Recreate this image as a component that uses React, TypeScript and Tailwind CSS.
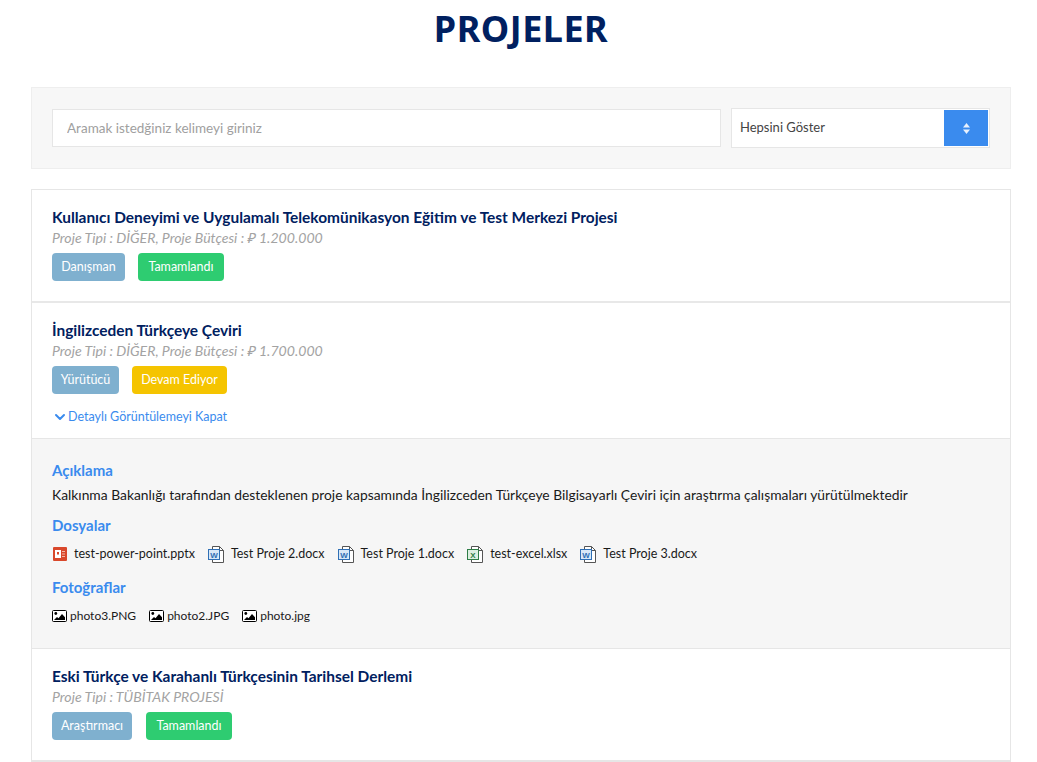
import { ChevronDown } from 'lucide-react';

const FONT = "font-['Lato','Noto_Sans',sans-serif]";

type BadgeColor = 'blue' | 'green' | 'yellow';

const badgeColors: Record<BadgeColor, string> = {
  blue: 'bg-[#7fb0cf]',
  green: 'bg-[#2ecc71]',
  yellow: 'bg-[#f5c400]',
};

function Badge({ label, color, width }: { label: string; color: BadgeColor; width: string }) {
  return (
    <span
      className={`flex h-7 items-center justify-center rounded-[4px] text-[12.5px] text-white ${badgeColors[color]} ${width}`}
    >
      {label}
    </span>
  );
}

function ProjectHead({ title, meta }: { title: string; meta: string }) {
  return (
    <>
      <h2 className="mb-[1px] text-[15.45px] leading-5 font-bold text-[#002060]">{title}</h2>
      <p className="text-[14.1px] leading-5 text-[#a3a3a3] italic">{meta}</p>
    </>
  );
}

function DocIcon({ letter, color, fill }: { letter: string; color: string; fill: string }) {
  return (
    <svg width="17" height="17" viewBox="0 0 17 17" className="shrink-0">
      <path d="M4.5 0.5h7l4 4v12h-11z" fill="#fff" stroke="#555" strokeWidth="1" />
      <path d="M11.5 0.5v4h4" fill="none" stroke="#555" strokeWidth="1" />
      <rect x="0.5" y="3.5" width="11" height="10" fill={fill} stroke={color} strokeWidth="1" />
      <text
        x="6"
        y="11.5"
        textAnchor="middle"
        fontSize="8"
        fontWeight="700"
        fontFamily="Liberation Sans, sans-serif"
        fill={color}
      >
        {letter}
      </text>
    </svg>
  );
}

function PptIcon() {
  return (
    <svg width="14" height="14" viewBox="0 0 14 14" className="ml-[1px] shrink-0">
      <rect width="14" height="14" rx="1" fill="#d9482b" />
      <rect x="2" y="3" width="6" height="8" fill="#fff" />
      <rect x="4" y="5" width="2" height="2.5" fill="#d9482b" />
      <rect x="9" y="4" width="3" height="1" fill="#f3b9a8" />
      <rect x="9" y="6.5" width="3" height="1" fill="#f3b9a8" />
      <rect x="9" y="9" width="3" height="1" fill="#f3b9a8" />
    </svg>
  );
}

function ImageIcon() {
  return (
    <svg width="15" height="12" viewBox="0 0 15 12" className="shrink-0">
      <rect x="0.5" y="0.5" width="14" height="11" rx="1" fill="#fff" stroke="#000" />
      <circle cx="3.8" cy="3.5" r="1.4" fill="#000" />
      <path d="M2 10l3-3 1.5 1.2L10 4l3 3.2V10z" fill="#000" />
    </svg>
  );
}

const files = [
  { name: 'test-power-point.pptx', icon: <PptIcon />, gap: 'gap-[7px]' },
  { name: 'Test Proje 2.docx', icon: <DocIcon letter="W" color="#2f6fb5" fill="#d8e8f7" />, gap: 'gap-[6px]' },
  { name: 'Test Proje 1.docx', icon: <DocIcon letter="W" color="#2f6fb5" fill="#d8e8f7" />, gap: 'gap-[6px]' },
  { name: 'test-excel.xlsx', icon: <DocIcon letter="X" color="#2e7d46" fill="#dcefe1" />, gap: 'gap-[6px]' },
  { name: 'Test Proje 3.docx', icon: <DocIcon letter="W" color="#2f6fb5" fill="#d8e8f7" />, gap: 'gap-[6px]' },
];

const photos = ['photo3.PNG', 'photo2.JPG', 'photo.jpg'];

export default function App() {
  return (
    <div className={`min-h-screen overflow-hidden bg-white ${FONT}`}>
      <h1 className="h-[87px] pt-[7px] pl-[5px] text-center font-['Noto_Sans',sans-serif] text-[36px] leading-[44px] font-bold tracking-[0.5px] text-[#002060]">
        PROJELER
      </h1>

      <div className="mr-[26px] ml-[31px]">
        <div className="flex h-[82px] items-center gap-[10px] border border-[#eeeeee] bg-[#f7f7f7] pr-5 pl-5">
          <input
            placeholder="Aramak istedğiniz kelimeyi giriniz"
            className="h-[38px] flex-1 border border-[#e6e6e6] bg-white px-[14px] text-[13.5px] outline-none placeholder:text-[#a0a0a0]"
          />
          <div className="flex h-10 w-[259px] items-center border border-[#e6e6e6] bg-white p-[1px]">
            <span className="flex-1 pl-[7px] text-[13px] text-[#444444]">Hepsini Göster</span>
            <span className="flex h-9 w-11 items-center justify-center bg-[#3a8bee]">
              <svg width="7" height="11" viewBox="0 0 7 11" fill="#e8f1fd">
                <path d="M3.5 0L7 4.5H0z" />
                <path d="M3.5 11L0 6.5h7z" />
              </svg>
            </span>
          </div>
        </div>

        <div className="mt-5 border border-[#e6e6e6]">
          <section className="h-[113px] border-b-2 border-[#e8e8e8] px-5 pt-[17px]">
            <ProjectHead
              title="Kullanıcı Deneyimi ve Uygulamalı Telekomünikasyon Eğitim ve Test Merkezi Projesi"
              meta="Proje Tipi : DİĞER, Proje Bütçesi : ₽ 1.200.000"
            />
            <div className="mt-[5px] flex gap-[13px]">
              <Badge label="Danışman" color="blue" width="w-[73px]" />
              <Badge label="Tamamlandı" color="green" width="w-[86px]" />
            </div>
          </section>

          <section className="h-[136px] border-b border-[#e6e6e6] px-5 pt-[17px]">
            <ProjectHead
              title="İngilizceden Türkçeye Çeviri"
              meta="Proje Tipi : DİĞER, Proje Bütçesi : ₽ 1.700.000"
            />
            <div className="mt-[5px] flex gap-[13px]">
              <Badge label="Yürütücü" color="blue" width="w-[67px]" />
              <Badge label="Devam Ediyor" color="yellow" width="w-[95px]" />
            </div>
            <a className="mt-[14px] flex items-center text-[12.5px] leading-[18px] text-[#3a8bee]">
              <ChevronDown size={16} strokeWidth={3} />
              Detaylı Görüntülemeyi Kapat
            </a>
          </section>

          <section className="h-[210px] border-b border-[#e6e6e6] bg-[#f6f6f6] px-5 pt-[21px]">
            <h3 className="text-[15px] leading-5 font-bold text-[#3a8bee]">Açıklama</h3>
            <p className="mt-[5px] text-[13.85px] leading-5 text-[#1a1a1a]">
              Kalkınma Bakanlığı tarafından desteklenen proje kapsamında İngilizceden Türkçeye
              Bilgisayarlı Çeviri için araştırma çalışmaları yürütülmektedir
            </p>
            <h3 className="mt-[10px] text-[15px] leading-5 font-bold text-[#3a8bee]">Dosyalar</h3>
            <ul className="mt-[9px] flex h-5 items-center gap-[13px]">
              {files.map((file) => (
                <li key={file.name} className={`flex items-center text-[12.5px] text-[#1a1a1a] ${file.gap}`}>
                  {file.icon}
                  {file.name}
                </li>
              ))}
            </ul>
            <h3 className="mt-[13px] text-[15px] leading-5 font-bold text-[#3a8bee]">Fotoğraflar</h3>
            <ul className="mt-[9px] flex h-5 items-center gap-[13px]">
              {photos.map((photo) => (
                <li key={photo} className="flex items-center gap-[3px] text-[12px] text-[#1a1a1a]">
                  <ImageIcon />
                  {photo}
                </li>
              ))}
            </ul>
          </section>

          <section className="h-[112px] border-b border-[#e6e6e6] px-5 pt-[17px]">
            <ProjectHead title="Eski Türkçe ve Karahanlı Türkçesinin Tarihsel Derlemi" meta="Proje Tipi : TÜBİTAK PROJESİ" />
            <div className="mt-[5px] flex gap-[14px]">
              <Badge label="Araştırmacı" color="blue" width="w-[80px]" />
              <Badge label="Tamamlandı" color="green" width="w-[86px]" />
            </div>
          </section>
        </div>
      </div>
    </div>
  );
}
